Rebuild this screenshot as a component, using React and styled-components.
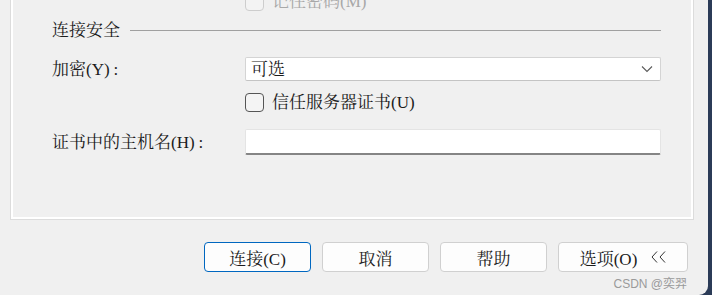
import React from 'react' ;
import styled, { createGlobalStyle } from 'styled-components' ;

const GlobalStyle = createGlobalStyle`
    html, body {
        margin : 0 ;
        padding : 0 ;
        background : #2b3b57 ;
        overflow : hidden ;
    }
    * {
        box-sizing : border-box ;
    }
`;

const FONT = `"Liberation Serif", "Noto Serif CJK SC", "Noto Sans CJK SC", serif` ;

const Window = styled.div`
    position : relative ;
    width : 708px ;
    height : 295px ;
    background : #f0f0f0 ;
    border-bottom-right-radius : 9px ;
    overflow : hidden ;
    font-family : ${FONT} ;
    font-size : 17px ;
    color : #1b1b1b ;
`;

const Group = styled.div`
    margin : -40px 0 0 10px ;
    width : 684px ;
    height : 260px ;
    border : 1px solid #dcdcdc ;
    box-shadow : inset 0 0 0 2px #ffffff ;
    padding : 30px 32px 0 41px ;
    display : flex ;
    flex-direction : column ;
`;

const Row = styled.div`
    display : grid ;
    grid-template-columns : 193px 1fr ;
    align-items : center ;
    height : ${props => props.h}px ;
    margin-top : ${props => props.mt || 0}px ;
`;

const Label = styled.span`
    white-space : nowrap ;
    line-height : 1 ;
`;

const Colon = styled.span`
    margin-left : 4px ;
`;

const CheckLine = styled.label`
    grid-column : 2 ;
    display : flex ;
    align-items : center ;
    gap : 8px ;
    color : ${props => props.disabled ? '#a8a8a8' : '#1b1b1b'} ;
    line-height : 1 ;
    white-space : nowrap ;
`;

const Box = styled.span`
    width : 19px ;
    height : 19px ;
    border-radius : 4px ;
    border : 1px solid ${props => props.disabled ? '#cdcdcd' : '#555555'} ;
    background : ${props => props.disabled ? '#f3f3f3' : '#f4f4f4'} ;
    flex : none ;
`;

const Header = styled.div`
    display : flex ;
    align-items : center ;
    gap : 10px ;
    height : 20px ;
    margin-top : 9px ;
    line-height : 1 ;

    &::after {
        content : '' ;
        flex : 1 ;
        height : 1px ;
        background : #a0a0a0 ;
    }
`;

const Select = styled.div`
    height : 24px ;
    background : #ffffff ;
    border : 1px solid #d4d4d4 ;
    border-bottom-color : #c4c4c4 ;
    border-radius : 2px ;
    display : flex ;
    align-items : center ;
    justify-content : space-between ;
    padding : 0 7px 0 5px ;
    line-height : 1 ;
`;

const Input = styled.div`
    height : 26px ;
    background : #ffffff ;
    border : 1px solid #e4e4e4 ;
    border-bottom : 2px solid #858585 ;
    border-radius : 2px ;
`;

const Buttons = styled.div`
    display : flex ;
    justify-content : flex-end ;
    gap : 11px ;
    margin-top : 22px ;
    padding-right : 20px ;
`;

const Button = styled.button`
    width : ${props => props.w || 107}px ;
    height : 30px ;
    background : #fdfdfd ;
    border : 1px solid ${props => props.primary ? '#0067c0' : '#d0d0d0'} ;
    border-radius : 4px ;
    font-family : ${FONT} ;
    font-size : 17px ;
    color : #1b1b1b ;
    padding : 0 ;
    display : flex ;
    align-items : center ;
    justify-content : center ;
    gap : 14px ;
`;

const Watermark = styled.span`
    position : absolute ;
    right : 21px ;
    bottom : 4px ;
    font-family : "Liberation Sans", "Noto Sans CJK SC", sans-serif ;
    font-size : 12px ;
    color : #9a9a9a ;
`;

const Chevron = () => (
    <svg width="12" height="8" viewBox="0 0 12 8">
        <polyline points="1,1.5 6,6.5 11,1.5" fill="none" stroke="#5a5a5a" strokeWidth="1.1" />
    </svg>
) ;

const DoubleLeft = () => (
    <svg width="15" height="12" viewBox="0 0 15 12">
        <polyline points="6,0.5 1,6 6,11.5" fill="none" stroke="#333333" strokeWidth="1" />
        <polyline points="14,0.5 9,6 14,11.5" fill="none" stroke="#333333" strokeWidth="1" />
    </svg>
) ;

const App = () => {
    return (
        <>
            <GlobalStyle />
            <Window>
                <Group>
                    <Row h={20}>
                        <CheckLine disabled>
                            <Box disabled />
                            记住密码(M)
                        </CheckLine>
                    </Row>
                    <Header>连接安全</Header>
                    <Row h={24} mt={17}>
                        <Label>加密(Y)<Colon>:</Colon></Label>
                        <Select>
                            <span>可选</span>
                            <Chevron />
                        </Select>
                    </Row>
                    <Row h={19} mt={12}>
                        <CheckLine>
                            <Box />
                            信任服务器证书(U)
                        </CheckLine>
                    </Row>
                    <Row h={26} mt={17}>
                        <Label>证书中的主机名(H)<Colon>:</Colon></Label>
                        <Input />
                    </Row>
                </Group>
                <Buttons>
                    <Button primary>连接(C)</Button>
                    <Button>取消</Button>
                    <Button>帮助</Button>
                    <Button w={130}><span>选项(O)</span><DoubleLeft /></Button>
                </Buttons>
                <Watermark>CSDN @奕羿</Watermark>
            </Window>
        </>
    );
};

export default App ;
